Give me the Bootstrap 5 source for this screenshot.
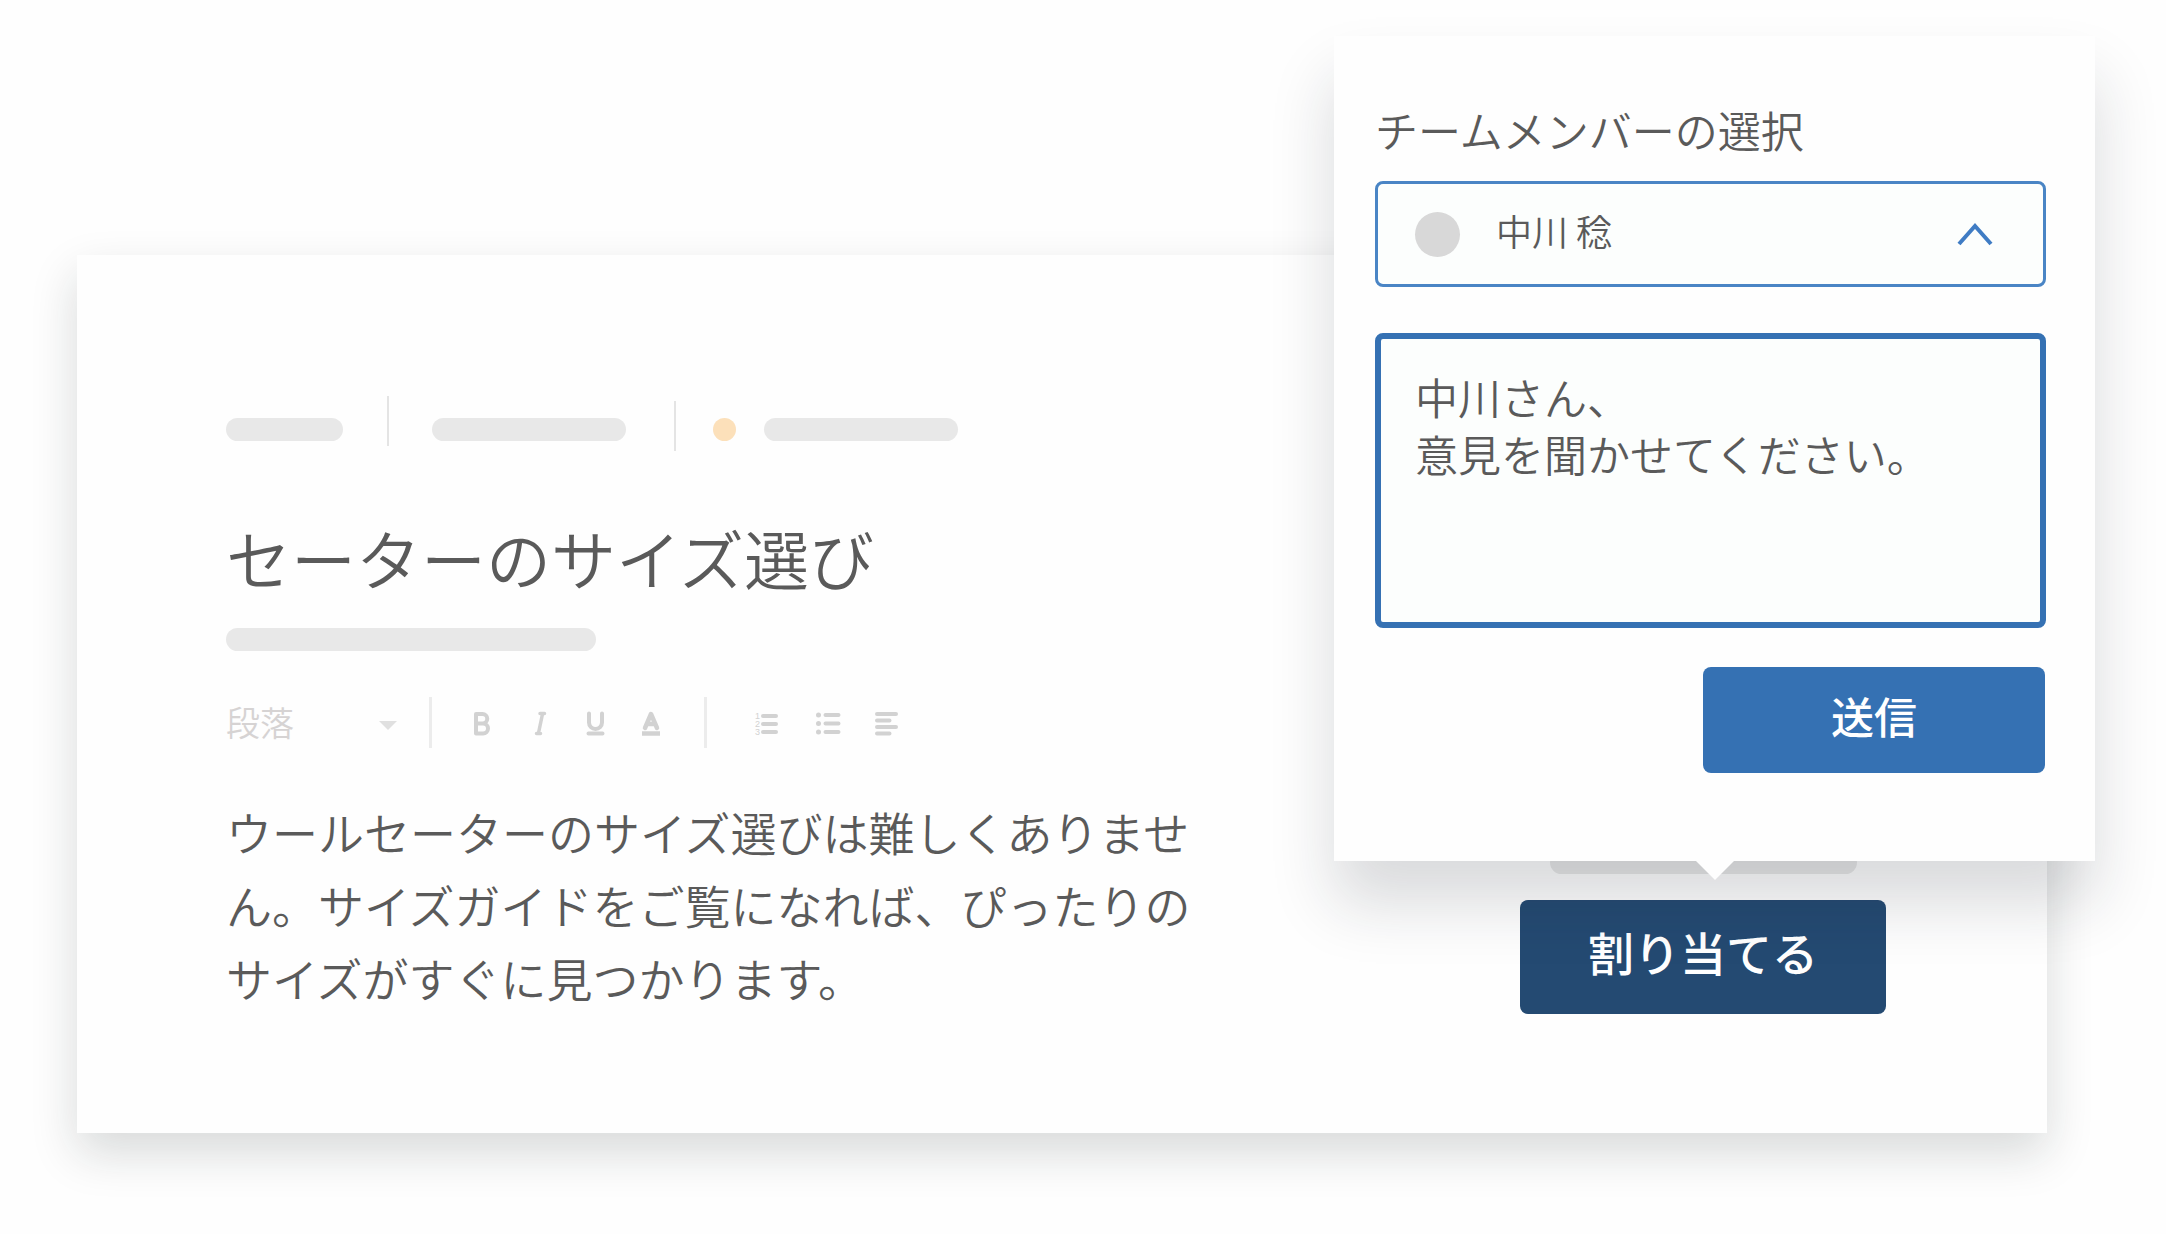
<!DOCTYPE html>
<html lang="ja">
<head>
<meta charset="utf-8">
<meta name="viewport" content="width=device-width, initial-scale=1">
<title>セーターのサイズ選び</title>
<link href="https://cdn.jsdelivr.net/npm/bootstrap@5.3.0/dist/css/bootstrap.min.css" rel="stylesheet">
<style>
  :root { --ink: #5a5a5a; --blue: #3571b3; --navy: #244a72; --bone: #e8e8e8; --faint: #d6d3d3; }
  body { background: #fefefe; color: var(--ink); font-family: "Noto Sans CJK JP", sans-serif; font-weight: 350; padding: 255px 119px 100px 77px; }

  /* article card */
  .article { background: #fefefe; padding: 141px 161px 119px 149px; box-shadow: 0 20px 44px rgba(20, 34, 28, .16); }
  .bone { height: 23px; border-radius: 12px; background: var(--bone); }
  .bone-s { width: 117px; }
  .bone-m { width: 194px; }
  .bone-l { width: 370px; }
  .bone-xl { width: 307px; }
  .status-dot { width: 23px; height: 23px; border-radius: 50%; background: #fce0ba; margin: 0 28px 0 37px; }
  .meta-row { height: 67px; }
  .divider { width: 2px; height: 50px; background: #e4e4e4; }
  .meta-row .divider { margin: 0 43px 0 44px; }
  .meta-row .divider-low { margin: 0 0 8px 48px; }
  .article-title { font-size: 65px; line-height: 84px; font-weight: 350; margin: 52px 0 29px; }
  .article-text { font-size: 46px; line-height: 73px; max-width: 968px; margin-top: 47px; }

  .toolbar { height: 51px; margin-top: 46px; color: #d2d2d2; }
  .toolbar .divider { width: 3px; height: 51px; background: #ececec; }
  .style-picker { width: 171px; margin-right: 32px; }
  .style-picker select { font-size: 34px; line-height: 51px; color: var(--faint); font-weight: 350; border: 0; background: none; appearance: none; padding: 0 0 2px; }
  .style-picker svg { margin-top: 6px; }
  .tools { gap: 32px; margin: 2px 41px 0 39px; }
  .list-tools { gap: 36px; margin: 2px 0 0 47px; }
  .tool { border: 0; background: none; padding: 0; color: inherit; line-height: 1; width: 24px; height: 24px; }
  .tool svg, .style-picker svg { display: block; overflow: visible; }

  .assign { font-size: 46px; line-height: 60px; font-weight: 500; color: #fff; background: var(--navy); border: 0; border-radius: 8px; padding: 21px 68px 33px; margin-top: 26px; }
  .assign:hover { background: var(--navy); color: #fff; }

  /* assignment pop-over */
  .assign-pop { position: absolute; right: -48px; bottom: 272px; width: 761px; padding: 63px 49px 88px 41px; background: #fefefe; box-shadow: 0 42px 60px rgba(26, 34, 42, .16); }
  .assign-pop::after { content: ""; position: absolute; top: 100%; left: 50%; margin-left: -19px; border: 19px solid transparent; border-top-color: #fefefe; border-bottom: 0; }
  .pop-label { font-size: 43px; line-height: 60px; margin-bottom: 22px; }
  .member { border: 3px solid #4a85c5; border-radius: 8px; background: #fcfefd; height: 106px; padding: 0 50px 0 37px; }
  .member select { font-size: 36px; line-height: 54px; color: var(--ink); font-weight: 350; border: 0; background: none; appearance: none; padding: 0; margin: 0 0 8px 36px; }
  .avatar { width: 45px; height: 45px; border-radius: 50%; background: #d8d8d8; }
  .note { display: block; width: 100%; height: 295px; resize: none; border: 6px solid var(--blue); border-radius: 8px; background: #fcfefd; color: var(--ink); font-size: 43px; line-height: 57px; font-weight: 350; padding: 29px 34px; margin: 46px 0 39px; outline: 0; }
  .send { width: 342px; margin-right: 1px; font-size: 43px; line-height: 60px; font-weight: 500; color: #fff; background: var(--blue); border: 0; border-radius: 8px; padding: 18px 0 28px; }
  .send:hover { background: var(--blue); color: #fff; }
</style>
</head>
<body>
<main class="article position-relative d-flex justify-content-between">
  <article>
    <div class="meta-row d-flex align-items-center">
      <div class="bone bone-s"></div>
      <div class="divider align-self-start"></div>
      <div class="bone bone-m"></div>
      <div class="divider divider-low"></div>
      <div class="status-dot"></div>
      <div class="bone bone-m"></div>
    </div>
    <h1 class="article-title">セーターのサイズ選び</h1>
    <div class="bone bone-l"></div>

    <div class="toolbar d-flex align-items-center" role="toolbar" aria-label="書式">
      <div class="style-picker d-flex align-items-center">
        <select class="flex-grow-1" aria-label="段落スタイル"><option>段落</option></select>
        <svg width="18" height="10" viewBox="0 0 18 10" aria-hidden="true"><path d="M0 0h18L9 9z" fill="#e0e0e0"/></svg>
      </div>
      <div class="divider"></div>
      <div class="tools d-flex">
        <button class="tool" type="button" aria-label="太字"><svg width="24" height="24" viewBox="0 0 24 24" fill="none" stroke="currentColor" stroke-width="4" stroke-linejoin="round"><path d="M5 2h6.500a4.500 4.500 0 0 1 0 9.500H5zM5 11.500h7a5 5 0 0 1 0 10H5z"/></svg></button>
        <button class="tool" type="button" aria-label="斜体"><svg width="24" height="24" viewBox="0 0 24 24" fill="none" stroke="currentColor" stroke-width="3.500" stroke-linecap="round"><path d="M13 1.500h4.500M9.500 21.500h4M15.500 2l-4 19"/></svg></button>
        <button class="tool" type="button" aria-label="下線"><svg width="24" height="24" viewBox="0 0 24 24" fill="none" stroke="currentColor" stroke-width="4" stroke-linecap="round"><path d="M6 1.500v9a6.500 6.500 0 0 0 13 0v-9M5.500 21.500h14"/></svg></button>
        <button class="tool" type="button" aria-label="文字色"><svg width="24" height="24" viewBox="0 0 24 24" fill="none" stroke="currentColor" stroke-width="4.500" stroke-linecap="round" stroke-linejoin="round"><path d="M6 16l6-14L18 16M8.500 12h7"/><path d="M3 21.500h18" stroke-linecap="butt"/></svg></button>
      </div>
      <div class="divider"></div>
      <div class="list-tools d-flex">
        <button class="tool" type="button" aria-label="番号付きリスト"><svg width="24" height="24" viewBox="0 0 24 24" fill="none" stroke="currentColor" stroke-width="4" stroke-linecap="round"><path d="M9 4h13M9 12h13M9 20h13"/><g fill="currentColor" stroke="none" font-family="Liberation Sans" font-weight="400" font-size="9"><text x="1" y="7">1</text><text x="1" y="15">2</text><text x="1" y="23">3</text></g></svg></button>
        <button class="tool" type="button" aria-label="箇条書き"><svg width="24" height="24" viewBox="0 0 24 24" fill="none" stroke="currentColor" stroke-width="4" stroke-linecap="round"><path d="M11.500 3h13M11.500 11.500h13M11.500 20h13"/><path d="M4.500 3h.01M4.500 11.500h.01M4.500 20h.01" stroke-width="5"/></svg></button>
        <button class="tool" type="button" aria-label="左揃え"><svg width="24" height="24" viewBox="0 0 24 24" fill="none" stroke="currentColor" stroke-width="4" stroke-linecap="round"><path d="M3 2h19M3 8.500h12.500M3 15h19M3 21.500h12.500"/></svg></button>
      </div>
    </div>

    <p class="article-text mb-0">ウールセーターのサイズ選びは難しくありません。サイズガイドをご覧になれば、ぴったりのサイズがすぐに見つかります。</p>
  </article>

  <aside class="d-flex flex-column align-items-center align-self-end">
    <div class="bone bone-xl"></div>
    <button class="btn assign" type="button">割り当てる</button>
  </aside>

  <form class="assign-pop">
    <label class="pop-label d-block" for="member">チームメンバーの選択</label>
    <div class="member d-flex align-items-center">
      <span class="avatar"></span>
      <select class="flex-grow-1" id="member"><option>中川 稔</option></select>
      <svg width="36" height="24" viewBox="0 0 36 24" fill="none" stroke="#3f7cc4" stroke-width="4" aria-hidden="true"><path d="M2 22L18 4l16 18"/></svg>
    </div>
    <textarea class="note" aria-label="メッセージ">中川さん、
意見を聞かせてください。</textarea>
    <div class="d-flex justify-content-end">
      <button class="btn send" type="button">送信</button>
    </div>
  </form>
</main>
<script src="https://cdn.jsdelivr.net/npm/bootstrap@5.3.0/dist/js/bootstrap.bundle.min.js"></script>
</body>
</html>
